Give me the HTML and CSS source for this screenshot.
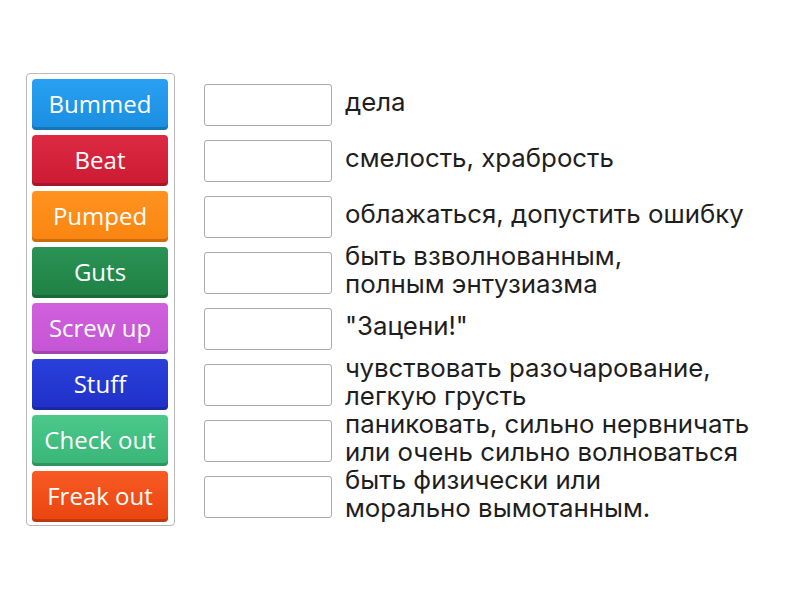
FILE: index.html
```html
<!DOCTYPE html>
<html lang="ru">
<head>
<meta charset="utf-8">
<link rel="stylesheet" href="styles.css">
</head>
<body>
<div class="page">
  <div class="panel">
    <div class="tile blue">Bummed</div>
    <div class="tile red">Beat</div>
    <div class="tile orange">Pumped</div>
    <div class="tile green">Guts</div>
    <div class="tile purple">Screw up</div>
    <div class="tile navy">Stuff</div>
    <div class="tile mint">Check out</div>
    <div class="tile vermilion">Freak out</div>
  </div>
  <div class="targets">
    <div class="row"><div class="slot"></div><div class="label">дела</div></div>
    <div class="row"><div class="slot"></div><div class="label">смелость, храбрость</div></div>
    <div class="row"><div class="slot"></div><div class="label">облажаться, допустить ошибку</div></div>
    <div class="row"><div class="slot"></div><div class="label">быть взволнованным,<br>полным энтузиазма</div></div>
    <div class="row"><div class="slot"></div><div class="label">"Зацени!"</div></div>
    <div class="row"><div class="slot"></div><div class="label">чувствовать разочарование,<br>легкую грусть</div></div>
    <div class="row"><div class="slot"></div><div class="label">паниковать, сильно нервничать<br>или очень сильно волноваться</div></div>
    <div class="row"><div class="slot"></div><div class="label">быть физически или<br>морально вымотанным.</div></div>
  </div>
</div>
</body>
</html>
```
FILE: styles.css
```css
html, body {
  margin: 0;
  padding: 0;
  background: #ffffff;
}
.page {
  display: flex;
  align-items: flex-start;
  padding: 73px 0 0 26px;
  gap: 29px;
}
.panel {
  display: flex;
  flex-direction: column;
  gap: 5px;
  padding: 5px 6px 3px 5px;
  border: 1px solid #b9b9b9;
  border-radius: 4px;
}
.tile {
  width: 136px;
  height: 51px;
  box-sizing: border-box;
  border-radius: 4px;
  color: #ffffff;
  font-family: "Open Sans", Lato, sans-serif;
  font-size: 24px;
  display: flex;
  align-items: center;
  justify-content: center;
  padding-bottom: 3px;
  box-shadow: inset 0 -3px 0 rgba(0,0,0,0.18);
}
.blue { background: linear-gradient(#2aa0f3, #1a8ee0); }
.red { background: linear-gradient(#dc2a43, #cc1a32); }
.orange { background: linear-gradient(#ff9320, #fa8510); }
.green { background: linear-gradient(#2a9455, #1f8044); }
.purple { background: linear-gradient(#d060dd, #c455d4); }
.navy { background: linear-gradient(#2a40da, #1f30c8); }
.mint { background: linear-gradient(#4cc88c, #38b577); }
.vermilion { background: linear-gradient(#f85a22, #ea4410); }
.targets {
  display: flex;
  flex-direction: column;
  padding-top: 11px;
}
.row {
  height: 56px;
  display: flex;
  align-items: center;
  gap: 13px;
}
.slot {
  width: 128px;
  height: 42px;
  box-sizing: border-box;
  border: 1px solid #a8a8a8;
  border-radius: 3px;
  background: #fff;
  align-self: flex-start;
  flex: none;
}
.label {
  font-family: Inter, Roboto, sans-serif;
  font-size: 25.8px;
  line-height: 28.5px;
  color: #1e1e1e;
  margin-top: -20px;
  white-space: nowrap;
}
```
